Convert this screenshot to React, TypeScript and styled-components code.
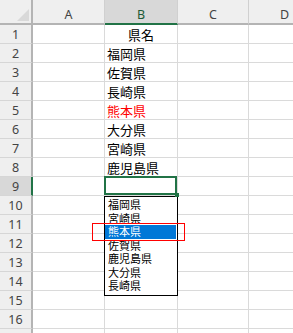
import React from "react";
import styled, { createGlobalStyle } from "styled-components";

const GlobalStyle = createGlobalStyle`
  html, body {
    margin: 0;
    padding: 0;
    background: #ffffff;
    overflow: hidden;
  }
`;

const GRID = "#dadada";
const HEADER_BG = "#efefef";
const HEADER_SEL = "#d8d8d8";
const GREEN = "#217346";
const CJK = `"Noto Sans CJK JP", "Noto Sans", sans-serif`;

const Viewport = styled.div`
  width: 293px;
  height: 333px;
  overflow: hidden;
`;

const Sheet = styled.div`
  display: grid;
  grid-template-columns: 33px 72px 73px 71px 72px;
  grid-template-rows: 25px;
  grid-auto-rows: 19px;
  width: 321px;
`;

const Corner = styled.div`
  background: ${HEADER_BG};
  border-right: 2px solid #b4b4b4;
  border-bottom: 2px solid #b4b4b4;
  box-sizing: border-box;
  display: flex;
  align-items: flex-end;
  justify-content: flex-end;
  padding: 0 2px 2px 0;
`;

const ColHead = styled.div<{ $sel?: boolean }>`
  background: ${({ $sel }) => ($sel ? HEADER_SEL : HEADER_BG)};
  border-right: 1px solid #d0d0d0;
  border-bottom: 2px solid ${({ $sel }) => ($sel ? GREEN : "#b4b4b4")};
  box-sizing: border-box;
  display: flex;
  align-items: center;
  justify-content: center;
  padding-top: 6px;
  font-family: "Noto Sans", "Open Sans", sans-serif;
  font-size: 12.5px;
  color: ${({ $sel }) => ($sel ? "#1d5a37" : "#444444")};
`;

const RowHead = styled.div<{ $sel?: boolean }>`
  background: ${({ $sel }) => ($sel ? HEADER_SEL : HEADER_BG)};
  border-right: 2px solid ${({ $sel }) => ($sel ? GREEN : "#b4b4b4")};
  border-bottom: 1px solid #d6d6d6;
  box-sizing: border-box;
  display: flex;
  align-items: center;
  justify-content: center;
  font-family: "Noto Sans", "Open Sans", sans-serif;
  font-size: 12.5px;
  color: #444444;
`;

const Cell = styled.div<{ $center?: boolean; $red?: boolean }>`
  border-right: 1px solid ${GRID};
  border-bottom: 1px solid ${GRID};
  box-sizing: border-box;
  display: flex;
  align-items: center;
  justify-content: ${({ $center }) => ($center ? "center" : "flex-start")};
  padding: 0 2px;
  font-family: ${CJK};
  font-size: 13px;
  line-height: 1;
  white-space: nowrap;
  color: ${({ $red }) => ($red ? "#ff0000" : "#000000")};
`;

const ActiveCell = styled(Cell)`
  position: relative;
  z-index: 2;

  &::after {
    content: "";
    position: absolute;
    left: -1px;
    top: -1px;
    right: 0;
    bottom: 0;
    border: 2px solid ${GREEN};
  }
`;

const FillHandle = styled.span`
  position: absolute;
  right: -2px;
  bottom: -2px;
  width: 4px;
  height: 4px;
  background: ${GREEN};
  z-index: 4;
`;

const Dropdown = styled.ul`
  position: absolute;
  left: -1px;
  top: 19px;
  width: 74px;
  height: 100px;
  margin: 0;
  padding: 1px 0 0 0;
  list-style: none;
  box-sizing: border-box;
  border: 1px solid #000000;
  background: #ffffff;
  z-index: 3;
`;

const Option = styled.li<{ $active?: boolean }>`
  height: 13.5px;
  margin-right: 1px;
  padding-left: 3px;
  font-family: ${CJK};
  font-size: 11px;
  line-height: 13.5px;
  color: ${({ $active }) => ($active ? "#ffffff" : "#000000")};
  background: ${({ $active }) => ($active ? "#0078d7" : "transparent")};
`;

const Callout = styled.div`
  position: absolute;
  left: -13px;
  top: 26px;
  width: 93px;
  height: 18px;
  box-sizing: border-box;
  border: 1.3px solid #ff0000;
  pointer-events: none;
`;

const cols = ["A", "B", "C", "D"];

const values: Record<number, { text: string; center?: boolean; red?: boolean }> = {
  1: { text: "県名", center: true },
  2: { text: "福岡県" },
  3: { text: "佐賀県" },
  4: { text: "長崎県" },
  5: { text: "熊本県", red: true },
  6: { text: "大分県" },
  7: { text: "宮崎県" },
  8: { text: "鹿児島県" },
};

const options = ["福岡県", "宮崎県", "熊本県", "佐賀県", "鹿児島県", "大分県", "長崎県"];

const App: React.FC = () => {
  const rows = Array.from({ length: 17 }, (_, i) => i + 1);

  return (
    <Viewport>
      <GlobalStyle />
      <Sheet>
        <Corner>
          <svg width="12" height="12" viewBox="0 0 12 12">
            <polygon points="12,0 12,12 0,12" fill="#d9d9d9" />
          </svg>
        </Corner>
        {cols.map((c) => (
          <ColHead key={c} $sel={c === "B"}>
            {c}
          </ColHead>
        ))}

        {rows.map((r) => {
          const v = values[r];
          return (
            <React.Fragment key={r}>
              {/* row 17 sits below the visible edge; its number is not shown */}
              <RowHead $sel={r === 9}>{r < 17 ? r : ""}</RowHead>
              <Cell />
              {r === 9 ? (
                <ActiveCell>
                  <FillHandle />
                  <Dropdown>
                    {options.map((o) => (
                      <Option key={o} $active={o === "熊本県"}>
                        {o}
                      </Option>
                    ))}
                    <Callout />
                  </Dropdown>
                </ActiveCell>
              ) : (
                <Cell $center={v?.center} $red={v?.red}>
                  {v?.text}
                </Cell>
              )}
              <Cell />
              <Cell />
            </React.Fragment>
          );
        })}
      </Sheet>
    </Viewport>
  );
};

export default App;
